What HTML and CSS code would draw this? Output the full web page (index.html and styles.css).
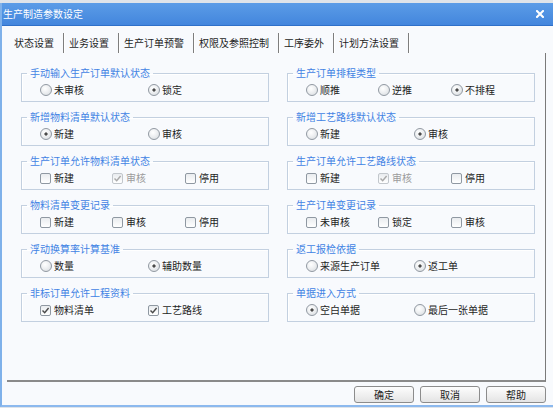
FILE: index.html
```html
<!DOCTYPE html>
<html lang="zh-CN">
<head>
<meta charset="utf-8">
<title>生产制造参数设定</title>
<link rel="stylesheet" href="styles.css">
</head>
<body>
<div class="window">
  <div class="titlebar">
    <span class="title">生产制造参数设定</span>
    <span class="close"><svg width="8" height="8" viewBox="0 0 8 8"><path d="M1 1L7 7M7 1L1 7" stroke="#fff" stroke-width="2" stroke-linecap="square"/></svg></span>
  </div>
  <div class="tabs">
    <div class="tab active">状态设置</div>
    <div class="tab">业务设置</div>
    <div class="tab">生产订单预警</div>
    <div class="tab">权限及参照控制</div>
    <div class="tab">工序委外</div>
    <div class="tab">计划方法设置</div>
  </div>
  <div class="panel">
    <div class="grid">
      <fieldset class="group"><legend>手动输入生产订单默认状态</legend>
        <div class="opts two">
          <span class="opt"><span class="radio"></span>未审核</span>
          <span class="opt"><span class="radio on"></span>锁定</span>
        </div>
      </fieldset>
      <fieldset class="group"><legend>生产订单排程类型</legend>
        <div class="opts three">
          <span class="opt"><span class="radio"></span>顺推</span>
          <span class="opt"><span class="radio"></span>逆推</span>
          <span class="opt"><span class="radio on"></span>不排程</span>
        </div>
      </fieldset>

      <fieldset class="group"><legend>新增物料清单默认状态</legend>
        <div class="opts two">
          <span class="opt"><span class="radio on"></span>新建</span>
          <span class="opt"><span class="radio"></span>审核</span>
        </div>
      </fieldset>
      <fieldset class="group"><legend>新增工艺路线默认状态</legend>
        <div class="opts two">
          <span class="opt"><span class="radio"></span>新建</span>
          <span class="opt"><span class="radio on"></span>审核</span>
        </div>
      </fieldset>

      <fieldset class="group"><legend>生产订单允许物料清单状态</legend>
        <div class="opts three">
          <span class="opt"><span class="check"></span>新建</span>
          <span class="opt disabled"><span class="check on"><svg width="9" height="9" viewBox="0 0 9 9"><path d="M1.5 4.5L3.7 6.8L7.6 2" fill="none" stroke="#a9a9a9" stroke-width="1.4"/></svg></span>审核</span>
          <span class="opt"><span class="check"></span>停用</span>
        </div>
      </fieldset>
      <fieldset class="group"><legend>生产订单允许工艺路线状态</legend>
        <div class="opts three">
          <span class="opt"><span class="check"></span>新建</span>
          <span class="opt disabled"><span class="check on"><svg width="9" height="9" viewBox="0 0 9 9"><path d="M1.5 4.5L3.7 6.8L7.6 2" fill="none" stroke="#a9a9a9" stroke-width="1.4"/></svg></span>审核</span>
          <span class="opt"><span class="check"></span>停用</span>
        </div>
      </fieldset>

      <fieldset class="group"><legend>物料清单变更记录</legend>
        <div class="opts three">
          <span class="opt"><span class="check"></span>新建</span>
          <span class="opt"><span class="check"></span>审核</span>
          <span class="opt"><span class="check"></span>停用</span>
        </div>
      </fieldset>
      <fieldset class="group"><legend>生产订单变更记录</legend>
        <div class="opts three">
          <span class="opt"><span class="check"></span>未审核</span>
          <span class="opt"><span class="check"></span>锁定</span>
          <span class="opt"><span class="check"></span>审核</span>
        </div>
      </fieldset>

      <fieldset class="group"><legend>浮动换算率计算基准</legend>
        <div class="opts two">
          <span class="opt"><span class="radio"></span>数量</span>
          <span class="opt"><span class="radio on"></span>辅助数量</span>
        </div>
      </fieldset>
      <fieldset class="group"><legend>返工报检依据</legend>
        <div class="opts two">
          <span class="opt"><span class="radio"></span>来源生产订单</span>
          <span class="opt"><span class="radio on"></span>返工单</span>
        </div>
      </fieldset>

      <fieldset class="group"><legend>非标订单允许工程资料</legend>
        <div class="opts two">
          <span class="opt"><span class="check on"><svg width="9" height="9" viewBox="0 0 9 9"><path d="M1.5 4.5L3.7 6.8L7.6 2" fill="none" stroke="#4a4a4a" stroke-width="1.4"/></svg></span>物料清单</span>
          <span class="opt"><span class="check on"><svg width="9" height="9" viewBox="0 0 9 9"><path d="M1.5 4.5L3.7 6.8L7.6 2" fill="none" stroke="#4a4a4a" stroke-width="1.4"/></svg></span>工艺路线</span>
        </div>
      </fieldset>
      <fieldset class="group"><legend>单据进入方式</legend>
        <div class="opts two">
          <span class="opt"><span class="radio on"></span>空白单据</span>
          <span class="opt"><span class="radio"></span>最后一张单据</span>
        </div>
      </fieldset>
    </div>
  </div>
  <div class="buttons">
    <button class="btn">确定</button>
    <button class="btn">取消</button>
    <button class="btn">帮助</button>
  </div>
</div>
</body>
</html>
```

FILE: styles.css
```css
* { box-sizing: border-box; }
html, body { margin: 0; padding: 0; }
body {
  background: #dfe4ea;
  font-family: "Noto Sans CJK SC", "Noto Sans", sans-serif;
  font-size: 10px;
  color: #1e1e1e;
  width: 553px;
  height: 408px;
  overflow: hidden;
  padding-top: 3px;
}
.window {
  width: 553px;
  height: 404px;
  background: #f8fafd;
  border-left: 2px solid #7fb1ea;
  border-bottom: 2px solid #8cb9ee;
  display: flex;
  flex-direction: column;
}
.titlebar {
  height: 23px;
  flex: none;
  background: linear-gradient(#5b9ce7, #4386dd);
  border-bottom: 1px solid #2f70c9;
  display: flex;
  align-items: center;
  justify-content: space-between;
  padding: 0 9px 0 1px;
  color: #fff;
  line-height: 12px;
}
.close { display: flex; }
.tabs {
  display: flex;
  margin: 7px 0 0 5px;
  height: 20px;
  flex: none;
}
.tab {
  padding: 0 9px 0 5px;
  border-right: 1px solid #7e7e7e;
  box-shadow: 1px 0 0 #ffffff;
  line-height: 20px;
  height: 20px;
  white-space: nowrap;
}
.tab.active { padding-left: 7px; }
.panel {
  margin-left: 5px;
  width: 539px;
  height: 329px;
  flex: none;
  border-right: 1px solid #7a7a7a;
  border-bottom: 2px solid #8a8a8a;
  padding: 14px 0 0 14px;
}
.grid {
  display: grid;
  grid-template-columns: 248px 248px;
  column-gap: 18px;
  row-gap: 9px;
}
.group {
  margin: 0;
  min-width: 0;
  border: 1px solid #c3d0e0;
  box-shadow: inset 1px 1px 0 #ffffff;
  padding: 4px 6px 4px 18px;
}
.group legend {
  margin-left: -13px;
  padding: 0 3px;
  color: #4283e4;
  line-height: 12px;
  height: 12px;
}
.opts {
  display: grid;
  height: 14px;
  align-items: center;
}
.opts.two { grid-template-columns: 108px 108px; }
.opts.three { grid-template-columns: 72px 73px 72px; }
.opt {
  display: flex;
  align-items: center;
  gap: 2px;
  line-height: 14px;
  white-space: nowrap;
}
.opt.disabled { color: #9c9c9c; }
.radio {
  width: 12px;
  height: 12px;
  border-radius: 50%;
  border: 1px solid #9199a2;
  background: radial-gradient(circle at 40% 35%, #ffffff 0, #eef0f2 45%, #d4d8dc 100%);
  flex: none;
}
.radio.on {
  background:
    radial-gradient(circle, #4a4a4a 0 1.3px, transparent 1.9px),
    radial-gradient(circle at 40% 35%, #ffffff 0, #eef0f2 45%, #d4d8dc 100%);
}
.check {
  width: 11px;
  height: 11px;
  margin: 0 1px 0 0;
  border: 1px solid #8f98a2;
  border-radius: 2px;
  background: linear-gradient(#e9ecef, #ffffff);
  flex: none;
  display: flex;
  align-items: center;
  justify-content: center;
}
.opt.disabled .check { border-color: #c2c7cc; }
.buttons {
  display: flex;
  justify-content: flex-end;
  gap: 6px;
  width: 544px;
  margin-top: 4px;
}
.btn {
  width: 60px;
  height: 17px;
  border: 1px solid #8c8c8c;
  border-radius: 3px;
  background: linear-gradient(#fdfdfd, #e4e4e4);
  font-family: inherit;
  font-size: 10px;
  line-height: 15px;
  color: #1e1e1e;
  padding: 0;
  text-align: center;
}
```
